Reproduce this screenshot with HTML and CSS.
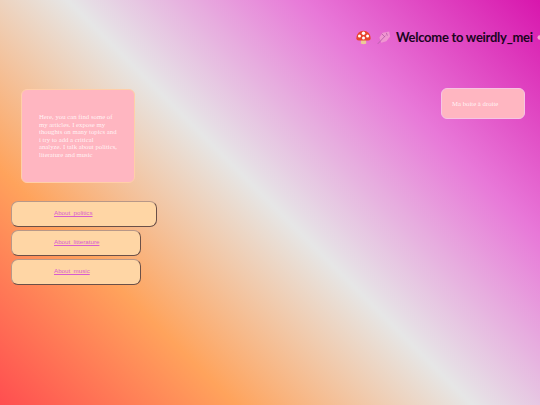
FILE: index.html
```html
<!DOCTYPE html>
<html lang="en">
<head>
<meta charset="utf-8">
<title>weirdly_mei</title>
<link rel="stylesheet" href="styles.css">
</head>
<body>
<header class="top">
  <h1 class="title">
    <svg class="emoji" viewBox="0 0 16 16" aria-hidden="true"><path d="M5.500 10.500h5l.5 4q-3 1.500-6 0z" fill="#eccb98"/><path d="M.4 9C.4 4 4 .8 8 .8s7.600 3.200 7.600 8.200q0 2.200-2.400 2.200H2.800Q.4 11.200.4 9z" fill="#e8452f"/><circle cx="8" cy="3.400" r="1.800" fill="#fff"/><circle cx="3.700" cy="6.400" r="1.600" fill="#fff"/><circle cx="12.300" cy="6.400" r="1.600" fill="#fff"/><circle cx="8" cy="8.400" r="1.600" fill="#fff"/></svg>
    <svg class="emoji feather" viewBox="0 0 16 16" aria-hidden="true"><path d="M13 1.500 6 3 2.500 8l2 5.500 5.500-1.500 4-5z" fill="#f4a6d2"/><path d="M.8 14.800 9 6M5 4l3.500 3.500M10 3l1 3" stroke="#a45c9a" stroke-width=".9" fill="none"/></svg>
    <span class="name">Welcome to weirdly_mei</span>
    <svg class="emoji trail" viewBox="0 0 16 16" aria-hidden="true"><circle cx="3" cy="8" r="2.500" fill="#f4a6d2"/></svg>
  </h1>
</header>
<main class="content">
  <div class="left">
    <section class="box intro">Here, you can find some of my articles. I expose my thoughts on many topics and i try to add a critical analyze. I talk about politics, literature and music</section>
    <nav class="links">
      <div class="link-card wide"><a href="#">About&nbsp; politics</a></div>
      <div class="link-card"><a href="#">About&nbsp; litterature</a></div>
      <div class="link-card"><a href="#">About&nbsp; music</a></div>
    </nav>
  </div>
  <aside class="box side">Ma boite à droite</aside>
</main>
</body>
</html>
```
FILE: styles.css
```css
html, body {
  margin: 0;
  height: 405px;
  overflow: hidden;
}
body {
  background: linear-gradient(45deg, #ff4e50 0%, #ffa35c 25%, #e6e6e6 50%, #e878d8 75%, #d816ad 100%);
  font-family: "Liberation Serif", serif;
}
.top {
  height: 89px;
  box-sizing: border-box;
  padding: 29px 0 0 356px;
  overflow: hidden;
}
.title {
  margin: 0;
  display: flex;
  align-items: center;
  height: 16px;
  font: 700 13px Lato, "Liberation Sans", sans-serif;
  letter-spacing: -.27px;
  color: #1a0420;
  white-space: nowrap;
}
.emoji {
  flex: none;
  width: 15px;
  height: 15px;
}
.feather {
  margin: 0 4px 0 6px;
  opacity: .75;
}
.name { margin-right: 4px; }
.content {
  display: flex;
  justify-content: space-between;
  align-items: flex-start;
  padding: 0 15px 0 11px;
}
.box {
  box-sizing: border-box;
  background: #ffb6c1;
  border-radius: 6px;
  color: rgba(255, 255, 255, .85);
  font-size: 6.750px;
}
.intro {
  width: 114px;
  height: 94px;
  margin-left: 10px;
  padding: 23px 17px 0;
  line-height: 7.600px;
  border: 1px solid #ffcfa8;
}
.side {
  width: 84px;
  height: 31px;
  margin-top: -1px;
  padding: 11px 10px;
  line-height: 8px;
  border: 1px solid #f7c4e4;
}
.links {
  display: flex;
  flex-direction: column;
  align-items: flex-start;
  gap: 3px;
  margin-top: 18px;
}
.link-card {
  box-sizing: border-box;
  width: 130px;
  height: 26px;
  padding: 7px 0 0 42px;
  background: #ffd6a5;
  border-radius: 7px;
  border: 1px solid #b89888;
  border-right-color: #6b5048;
  border-bottom-color: #6b5048;
  font: 6.200px "Liberation Sans", sans-serif;
}
.wide { width: 146px; }
.link-card a { color: #d85ccf; }
```
